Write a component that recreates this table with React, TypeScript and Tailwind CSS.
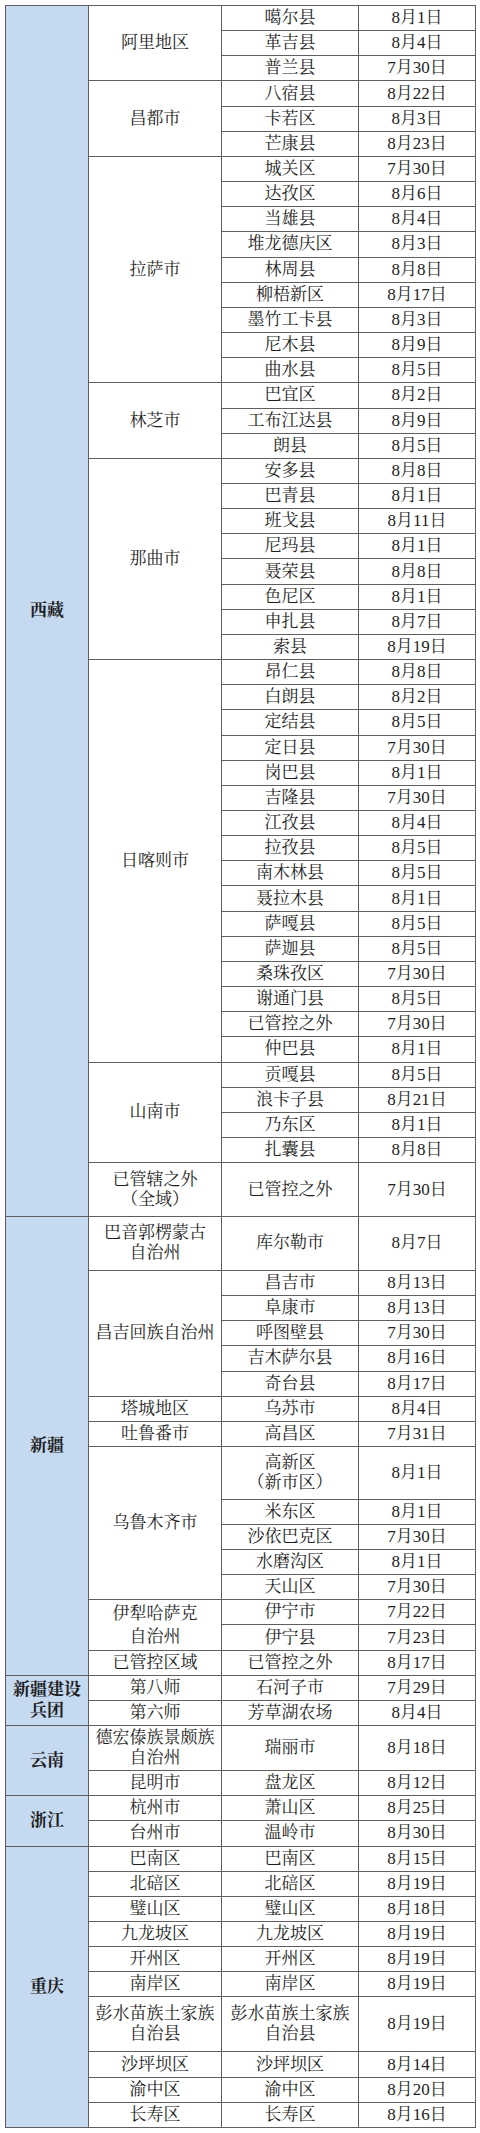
import React from "react";

type Txt = string | string[];
type Row = { n: Txt; d: string; h?: string };
type City = { c: Txt; lh?: string; rows: Row[] };
type Prov = { p: Txt; lh?: string; cities: City[] };

const r = (n: Txt, d: string, h?: string): Row => ({ n, d, h });

const data: Prov[] = [
  {
    p: "西藏",
    cities: [
      { c: "阿里地区", rows: [r("噶尔县", "8月1日"), r("革吉县", "8月4日"), r("普兰县", "7月30日")] },
      { c: "昌都市", rows: [r("八宿县", "8月22日"), r("卡若区", "8月3日"), r("芒康县", "8月23日")] },
      {
        c: "拉萨市",
        rows: [
          r("城关区", "7月30日"),
          r("达孜区", "8月6日"),
          r("当雄县", "8月4日"),
          r("堆龙德庆区", "8月3日"),
          r("林周县", "8月8日"),
          r("柳梧新区", "8月17日"),
          r("墨竹工卡县", "8月3日"),
          r("尼木县", "8月9日"),
          r("曲水县", "8月5日"),
        ],
      },
      { c: "林芝市", rows: [r("巴宜区", "8月2日"), r("工布江达县", "8月9日"), r("朗县", "8月5日")] },
      {
        c: "那曲市",
        rows: [
          r("安多县", "8月8日"),
          r("巴青县", "8月1日"),
          r("班戈县", "8月11日"),
          r("尼玛县", "8月1日"),
          r("聂荣县", "8月8日"),
          r("色尼区", "8月1日"),
          r("申扎县", "8月7日"),
          r("索县", "8月19日"),
        ],
      },
      {
        c: "日喀则市",
        rows: [
          r("昂仁县", "8月8日"),
          r("白朗县", "8月2日"),
          r("定结县", "8月5日"),
          r("定日县", "7月30日"),
          r("岗巴县", "8月1日"),
          r("吉隆县", "7月30日"),
          r("江孜县", "8月4日"),
          r("拉孜县", "8月5日"),
          r("南木林县", "8月5日"),
          r("聂拉木县", "8月1日"),
          r("萨嘎县", "8月5日"),
          r("萨迦县", "8月5日"),
          r("桑珠孜区", "7月30日"),
          r("谢通门县", "8月5日"),
          r("已管控之外", "7月30日"),
          r("仲巴县", "8月1日"),
        ],
      },
      {
        c: "山南市",
        rows: [r("贡嘎县", "8月5日"), r("浪卡子县", "8月21日"), r("乃东区", "8月1日"), r("扎囊县", "8月8日")],
      },
      { c: ["已管辖之外", "（全域）"], rows: [r("已管控之外", "7月30日", "h-[53.7px]")] },
    ],
  },
  {
    p: "新疆",
    cities: [
      { c: ["巴音郭楞蒙古", "自治州"], rows: [r("库尔勒市", "8月7日", "h-[54px]")] },
      {
        c: "昌吉回族自治州",
        rows: [
          r("昌吉市", "8月13日"),
          r("阜康市", "8月13日"),
          r("呼图壁县", "7月30日"),
          r("吉木萨尔县", "8月16日"),
          r("奇台县", "8月17日"),
        ],
      },
      { c: "塔城地区", rows: [r("乌苏市", "8月4日")] },
      { c: "吐鲁番市", rows: [r("高昌区", "7月31日")] },
      {
        c: "乌鲁木齐市",
        rows: [
          r(["高新区", "（新市区）"], "8月1日", "h-[52.7px]"),
          r("米东区", "8月1日"),
          r("沙依巴克区", "7月30日"),
          r("水磨沟区", "8月1日"),
          r("天山区", "7月30日"),
        ],
      },
      { c: ["伊犁哈萨克", "自治州"], lh: "leading-[23px]", rows: [r("伊宁市", "7月22日"), r("伊宁县", "7月23日")] },
      { c: "已管控区域", rows: [r("已管控之外", "8月17日")] },
    ],
  },
  {
    p: ["新疆建设", "兵团"],
    lh: "leading-[21px]",
    cities: [
      { c: "第八师", rows: [r("石河子市", "7月29日")] },
      { c: "第六师", rows: [r("芳草湖农场", "8月4日")] },
    ],
  },
  {
    p: "云南",
    cities: [
      { c: ["德宏傣族景颇族", "自治州"], rows: [r("瑞丽市", "8月18日", "h-[45px]")] },
      { c: "昆明市", rows: [r("盘龙区", "8月12日")] },
    ],
  },
  {
    p: "浙江",
    cities: [
      { c: "杭州市", rows: [r("萧山区", "8月25日")] },
      { c: "台州市", rows: [r("温岭市", "8月30日")] },
    ],
  },
  {
    p: "重庆",
    cities: [
      { c: "巴南区", rows: [r("巴南区", "8月15日")] },
      { c: "北碚区", rows: [r("北碚区", "8月19日")] },
      { c: "璧山区", rows: [r("璧山区", "8月18日")] },
      { c: "九龙坡区", rows: [r("九龙坡区", "8月19日")] },
      { c: "开州区", rows: [r("开州区", "8月19日")] },
      { c: "南岸区", rows: [r("南岸区", "8月19日")] },
      { c: ["彭水苗族土家族", "自治县"], rows: [r(["彭水苗族土家族", "自治县"], "8月19日", "h-[55px]")] },
      { c: "沙坪坝区", rows: [r("沙坪坝区", "8月14日")] },
      { c: "渝中区", rows: [r("渝中区", "8月20日")] },
      { c: "长寿区", rows: [r("长寿区", "8月16日")] },
    ],
  },
];

function T({ t }: { t: Txt }) {
  if (Array.isArray(t)) {
    return (
      <>
        {t.map((s, i) => (
          <React.Fragment key={i}>
            {i > 0 && <br />}
            {s}
          </React.Fragment>
        ))}
      </>
    );
  }
  return <>{t}</>;
}

const cell = "border border-[#5f5f5f] p-0 text-center align-middle whitespace-nowrap";

export default function App() {
  const trs: React.ReactNode[] = [];
  data.forEach((prov, pi) => {
    const provCount = prov.cities.reduce((a, c) => a + c.rows.length, 0);
    prov.cities.forEach((city, ci) => {
      city.rows.forEach((row, ri) => {
        const firstProv = ci === 0 && ri === 0;
        const firstCity = ri === 0;
        trs.push(
          <tr key={`${pi}-${ci}-${ri}`} className={row.h ?? "h-[25.17px]"}>
            {firstProv && (
              <td
                rowSpan={provCount}
                className={`${cell} bg-[#c5d9f1] font-bold ${prov.lh ?? "leading-[20px]"}`}
              >
                <T t={prov.p} />
              </td>
            )}
            {firstCity && (
              <td rowSpan={city.rows.length} className={`${cell} ${city.lh ?? "leading-[20px]"}`}>
                <T t={city.c} />
              </td>
            )}
            <td className={`${cell} leading-[20px]`}>
              <T t={row.n} />
            </td>
            <td className={`${cell} leading-[20px]`}>{row.d}</td>
          </tr>
        );
      });
    });
  });

  return (
    <div className="bg-white p-[5px] w-[480px] font-['Liberation_Serif','Noto_Serif_CJK_SC','Noto_Sans_CJK_SC',serif] text-[17px] text-[#1e1e1e]">
      <table className="table-fixed border-collapse w-[470px] border border-[#6a6a6a]">
        <colgroup>
          <col className="w-[83px]" />
          <col className="w-[133px]" />
          <col className="w-[137px]" />
          <col className="w-[117px]" />
        </colgroup>
        <tbody>{trs}</tbody>
      </table>
    </div>
  );
}
